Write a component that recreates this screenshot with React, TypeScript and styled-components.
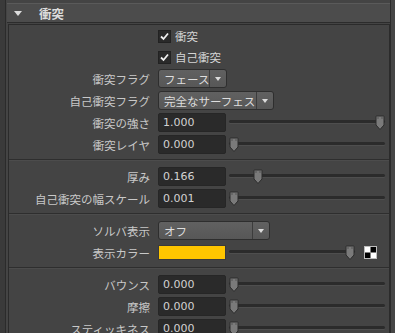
import React from 'react';
import styled, { createGlobalStyle } from 'styled-components';

const GlobalStyle = createGlobalStyle`
  html, body {
    margin: 0;
    padding: 0;
    background: #444444;
  }
  body {
    font-family: "Noto Sans CJK JP", "DejaVu Sans", sans-serif;
  }
`;

const Page = styled.div`
  display: flex;
  width: 395px;
  height: 333px;
  overflow: hidden;
  background: #444444;
`;

const LeftGutter = styled.div`
  flex: none;
  width: 5px;
  background: #3a3a3a;
  border-right: 1px solid #2b2b2b;
`;

const RightGutter = styled.div`
  flex: none;
  width: 4px;
  background: #464646;
  border-left: 1px solid #2b2b2b;
`;

const Main = styled.div`
  flex: 1;
  min-width: 0;
  display: flex;
  flex-direction: column;
  padding: 3px 0 0 1px;
`;

const Header = styled.div`
  flex: none;
  box-sizing: border-box;
  height: 20px;
  margin-bottom: 1px;
  display: flex;
  align-items: center;
  gap: 17px;
  padding-left: 7px;
  background: #4c4c4c;
  border-top: 1px solid #5a5a5a;
  border-bottom: 1px solid #2c2c2c;
  color: #dcdcdc;
  font-size: 12.5px;
  font-weight: bold;
`;

const HeaderArrow = styled.span`
  width: 0;
  height: 0;
  border-left: 4px solid transparent;
  border-right: 4px solid transparent;
  border-top: 5px solid #dddddd;
`;

const Frame = styled.div`
  flex: 1;
  margin-left: 1px;
  border: 1px solid #2b2b2b;
  border-bottom: none;
  background: #444444;
`;

const Section = styled.div<{ $top?: number }>`
  display: flex;
  flex-direction: column;
  gap: 3px;
  padding: ${p => p.$top ?? 6}px 0 5px;
`;

const Divider = styled.div`
  height: 0;
  border-top: 1px solid #2e2e2e;
  border-bottom: 1px solid #4c4c4c;
`;

const Row = styled.div<{ $h?: number }>`
  display: grid;
  grid-template-columns: 141px 1fr;
  column-gap: 8px;
  align-items: center;
  height: ${p => p.$h ?? 19}px;
`;

const Label = styled.span`
  text-align: right;
  white-space: nowrap;
  color: #c8c8c8;
  font-size: 11.5px;
`;

const Controls = styled.div<{ $right?: number }>`
  display: flex;
  align-items: center;
  gap: 3px;
  min-width: 0;
  padding-right: ${p => p.$right ?? 4}px;
`;

const CheckLine = styled.label`
  display: flex;
  align-items: center;
  gap: 4px;
  color: #d4d4d4;
  font-size: 11.5px;
`;

const CheckBox = styled.span`
  box-sizing: border-box;
  width: 13px;
  height: 13px;
  display: flex;
  align-items: center;
  justify-content: center;
  background: #2a2a2a;
  border: 1px solid #222222;
`;

const Field = styled.div`
  flex: none;
  box-sizing: border-box;
  width: 68px;
  height: 19px;
  display: flex;
  align-items: center;
  padding-left: 4px;
  background: #2a2a2a;
  border: 1px solid #262626;
  border-radius: 2px;
  color: #d2d2d2;
  font-family: "DejaVu Sans", sans-serif;
  font-size: 11px;
`;

const Dropdown = styled.div<{ $w: number }>`
  flex: none;
  box-sizing: border-box;
  width: ${p => p.$w}px;
  height: 19px;
  display: flex;
  align-items: stretch;
  background: linear-gradient(#616161, #575757);
  border: 1px solid #2e2e2e;
  border-radius: 3px;
  color: #dedede;
  font-size: 11.5px;
`;

const DropText = styled.span`
  flex: 1;
  display: flex;
  align-items: center;
  padding-left: 5px;
  white-space: nowrap;
`;

const DropArrow = styled.span`
  flex: none;
  width: 16px;
  display: flex;
  align-items: center;
  justify-content: center;
  border-left: 1px solid #3c3c3c;
  &::after {
    content: '';
    border-left: 3px solid transparent;
    border-right: 3px solid transparent;
    border-top: 4px solid #dcdcdc;
  }
`;

const Swatch = styled.div<{ $color: string }>`
  flex: none;
  box-sizing: border-box;
  width: 68px;
  height: 15px;
  background: ${p => p.$color};
  border: 1px solid #3a3a3a;
`;

const SliderWrap = styled.div`
  position: relative;
  flex: 1;
  height: 19px;
`;

const Track = styled.div`
  position: absolute;
  left: 0;
  right: 0;
  top: 7px;
  height: 3px;
  background: #2b2b2b;
  border-radius: 2px;
  box-shadow: 0 1px 0 #4e4e4e;
`;

const Thumb = styled.svg`
  position: absolute;
  top: 2px;
`;

const Checker = styled.svg`
  flex: none;
  margin-left: 6px;
`;

const Tick = () => (
  <svg width="9" height="9" viewBox="0 0 9 9">
    <path d="M1 4.5 L3.5 7 L8 1.5" fill="none" stroke="#f0f0f0" strokeWidth="1.8" />
  </svg>
);

const Slider = ({ value }: { value: number }) => (
  <SliderWrap>
    <Track />
    <Thumb
      width="11"
      height="16"
      viewBox="0 0 11 16"
      style={{ left: `calc((100% - 10px) * ${value})` }}
    >
      <path d="M1 1.5 Q1 1 1.5 1 H8.5 Q9 1 9 1.5 V10 L5 14.5 L1 10 Z" fill="#7a7a7a" stroke="#2c2c2c" />
      <rect x="2.5" y="2.5" width="1" height="1" fill="#333" />
      <rect x="6.5" y="2.5" width="1" height="1" fill="#333" />
    </Thumb>
  </SliderWrap>
);

const NumberRow = ({ label, value, pos }: { label: string; value: string; pos: number }) => (
  <Row>
    <Label>{label}</Label>
    <Controls>
      <Field>{value}</Field>
      <Slider value={pos} />
    </Controls>
  </Row>
);

const DropRow = ({ label, value, width }: { label: string; value: string; width: number }) => (
  <Row>
    <Label>{label}</Label>
    <Controls>
      <Dropdown $w={width}>
        <DropText>{value}</DropText>
        <DropArrow />
      </Dropdown>
    </Controls>
  </Row>
);

const CheckRow = ({ text }: { text: string }) => (
  <Row $h={18}>
    <span />
    <Controls>
      <CheckLine>
        <CheckBox>
          <Tick />
        </CheckBox>
        {text}
      </CheckLine>
    </Controls>
  </Row>
);

export default function App() {
  return (
    <>
      <GlobalStyle />
      <Page>
        <LeftGutter />
        <Main>
          <Header>
            <HeaderArrow />
            衝突
          </Header>
          <Frame>
            <Section $top={2}>
              <CheckRow text="衝突" />
              <CheckRow text="自己衝突" />
              <DropRow label="衝突フラグ" value="フェース" width={69} />
              <DropRow label="自己衝突フラグ" value="完全なサーフェス" width={116} />
              <NumberRow label="衝突の強さ" value="1.000" pos={1} />
              <NumberRow label="衝突レイヤ" value="0.000" pos={0} />
            </Section>
            <Divider />
            <Section>
              <NumberRow label="厚み" value="0.166" pos={0.166} />
              <NumberRow label="自己衝突の幅スケール" value="0.001" pos={0} />
            </Section>
            <Divider />
            <Section>
              <DropRow label="ソルバ表示" value="オフ" width={112} />
              <Row>
                <Label>表示カラー</Label>
                <Controls $right={12}>
                  <Swatch $color="#ffc600" />
                  <Slider value={1} />
                  <Checker width="13" height="13" viewBox="0 0 13 13">
                    <rect x="0.5" y="0.5" width="12" height="12" fill="#ffffff" stroke="#bdbdbd" />
                    <rect x="6.5" y="1" width="5.5" height="5.5" fill="#000" />
                    <rect x="1" y="6.5" width="5.5" height="5.5" fill="#000" />
                  </Checker>
                </Controls>
              </Row>
            </Section>
            <Divider />
            <Section>
              <NumberRow label="バウンス" value="0.000" pos={0} />
              <NumberRow label="摩擦" value="0.000" pos={0} />
              <NumberRow label="スティッキネス" value="0.000" pos={0} />
            </Section>
          </Frame>
        </Main>
        <RightGutter />
      </Page>
    </>
  );
}
